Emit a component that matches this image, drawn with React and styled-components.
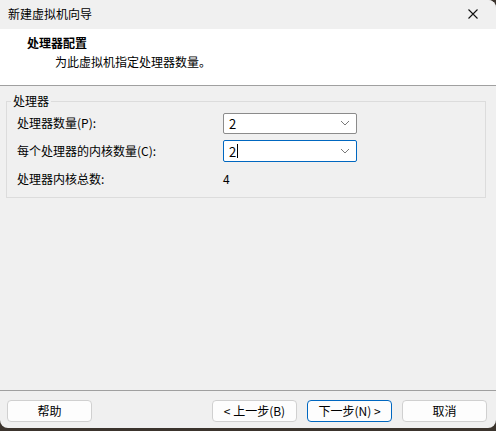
import React from "react";
import styled, { createGlobalStyle } from "styled-components";

const Global = createGlobalStyle`
  html, body {
    margin: 0;
    padding: 0;
    background: #3b342d;
  }
  * {
    box-sizing: border-box;
  }
`;

const Window = styled.div`
  width: 496px;
  height: 428px;
  background: #f0f0f0;
  border-radius: 0 8px 8px 8px;
  overflow: hidden;
  display: flex;
  flex-direction: column;
  font-family: "Noto Sans CJK SC", "Liberation Sans", sans-serif;
  font-size: 12px;
  color: #000;
`;

const TitleBar = styled.div`
  height: 29px;
  flex-shrink: 0;
  background: #f0f0f0;
  display: flex;
  align-items: center;
  justify-content: space-between;
  padding: 0 18px 2px 8px;
`;

const Header = styled.div`
  height: 57px;
  flex-shrink: 0;
  background: #fff;
  border-bottom: 1px solid #a0a0a0;
  padding: 6px 0 0 27px;
  display: flex;
  flex-direction: column;
  gap: 3px;
`;

const HeaderTitle = styled.div`
  font-weight: bold;
  line-height: 16px;
`;

const HeaderText = styled.div`
  margin-left: 28px;
  line-height: 16px;
`;

const Content = styled.div`
  flex: 1;
  padding: 8px 10px 0 6px;
`;

const Group = styled.fieldset`
  margin: 0;
  padding: 4px 10px 8px 10px;
  border: 1px solid #dcdcdc;
  height: 104px;
`;

const Legend = styled.legend`
  padding: 0 2px;
  margin-left: -6px;
  line-height: 14px;
`;

const Grid = styled.div`
  display: grid;
  grid-template-columns: 206px 134px;
  grid-auto-rows: 22px;
  row-gap: 6px;
  align-items: center;
`;

const Label = styled.div`
  line-height: 16px;
`;

const Combo = styled.div`
  height: ${(p) => (p.$focused ? "22px" : "21px")};
  background: #fff;
  border: 1px solid ${(p) => (p.$focused ? "#0067c0" : "#8b8b8b")};
  border-radius: 2px;
  display: flex;
  align-items: center;
  justify-content: space-between;
  padding: 0 6px 0 5px;
  font-size: 13px;
`;

const ComboValue = styled.span`
  display: flex;
  align-items: center;
`;

const Caret = styled.span`
  width: 1px;
  height: 14px;
  background: #000;
  margin-left: 1px;
`;

const Footer = styled.div`
  flex-shrink: 0;
  border-top: 1px solid #a0a0a0;
  padding: 9px 9px 6px 7px;
  display: flex;
  align-items: center;
  gap: 10px;
`;

const Spacer = styled.div`
  flex: 1;
`;

const Button = styled.button`
  width: 85px;
  height: 22px;
  background: #fdfdfd;
  border: 1px solid ${(p) => (p.$primary ? "#0067c0" : "#d0d0d0")};
  border-radius: 4px;
  font-family: inherit;
  font-size: 12px;
  color: #000;
  padding: 0;
  line-height: 1;
`;

const Chevron = () => (
  <svg width="10" height="6" viewBox="0 0 10 6">
    <path d="M1 1 L5 5 L9 1" fill="none" stroke="#7a7a7a" strokeWidth="1" />
  </svg>
);

const CloseIcon = () => (
  <svg width="10" height="10" viewBox="0 0 10 10">
    <path d="M0.5 0.5 L9.5 9.5 M9.5 0.5 L0.5 9.5" stroke="#111" strokeWidth="1.1" />
  </svg>
);

export default function App() {
  return (
    <>
      <Global />
      <Window>
        <TitleBar>
          <span>新建虚拟机向导</span>
          <CloseIcon />
        </TitleBar>
        <Header>
          <HeaderTitle>处理器配置</HeaderTitle>
          <HeaderText>为此虚拟机指定处理器数量。</HeaderText>
        </Header>
        <Content>
          <Group>
            <Legend>处理器</Legend>
            <Grid>
              <Label>处理器数量(P):</Label>
              <Combo>
                <ComboValue>2</ComboValue>
                <Chevron />
              </Combo>
              <Label>每个处理器的内核数量(C):</Label>
              <Combo $focused>
                <ComboValue>
                  2<Caret />
                </ComboValue>
                <Chevron />
              </Combo>
              <Label>处理器内核总数:</Label>
              <Label>4</Label>
            </Grid>
          </Group>
        </Content>
        <Footer>
          <Button>帮助</Button>
          <Spacer />
          <Button>&lt; 上一步(B)</Button>
          <Button $primary>下一步(N) &gt;</Button>
          <Button>取消</Button>
        </Footer>
      </Window>
    </>
  );
}
